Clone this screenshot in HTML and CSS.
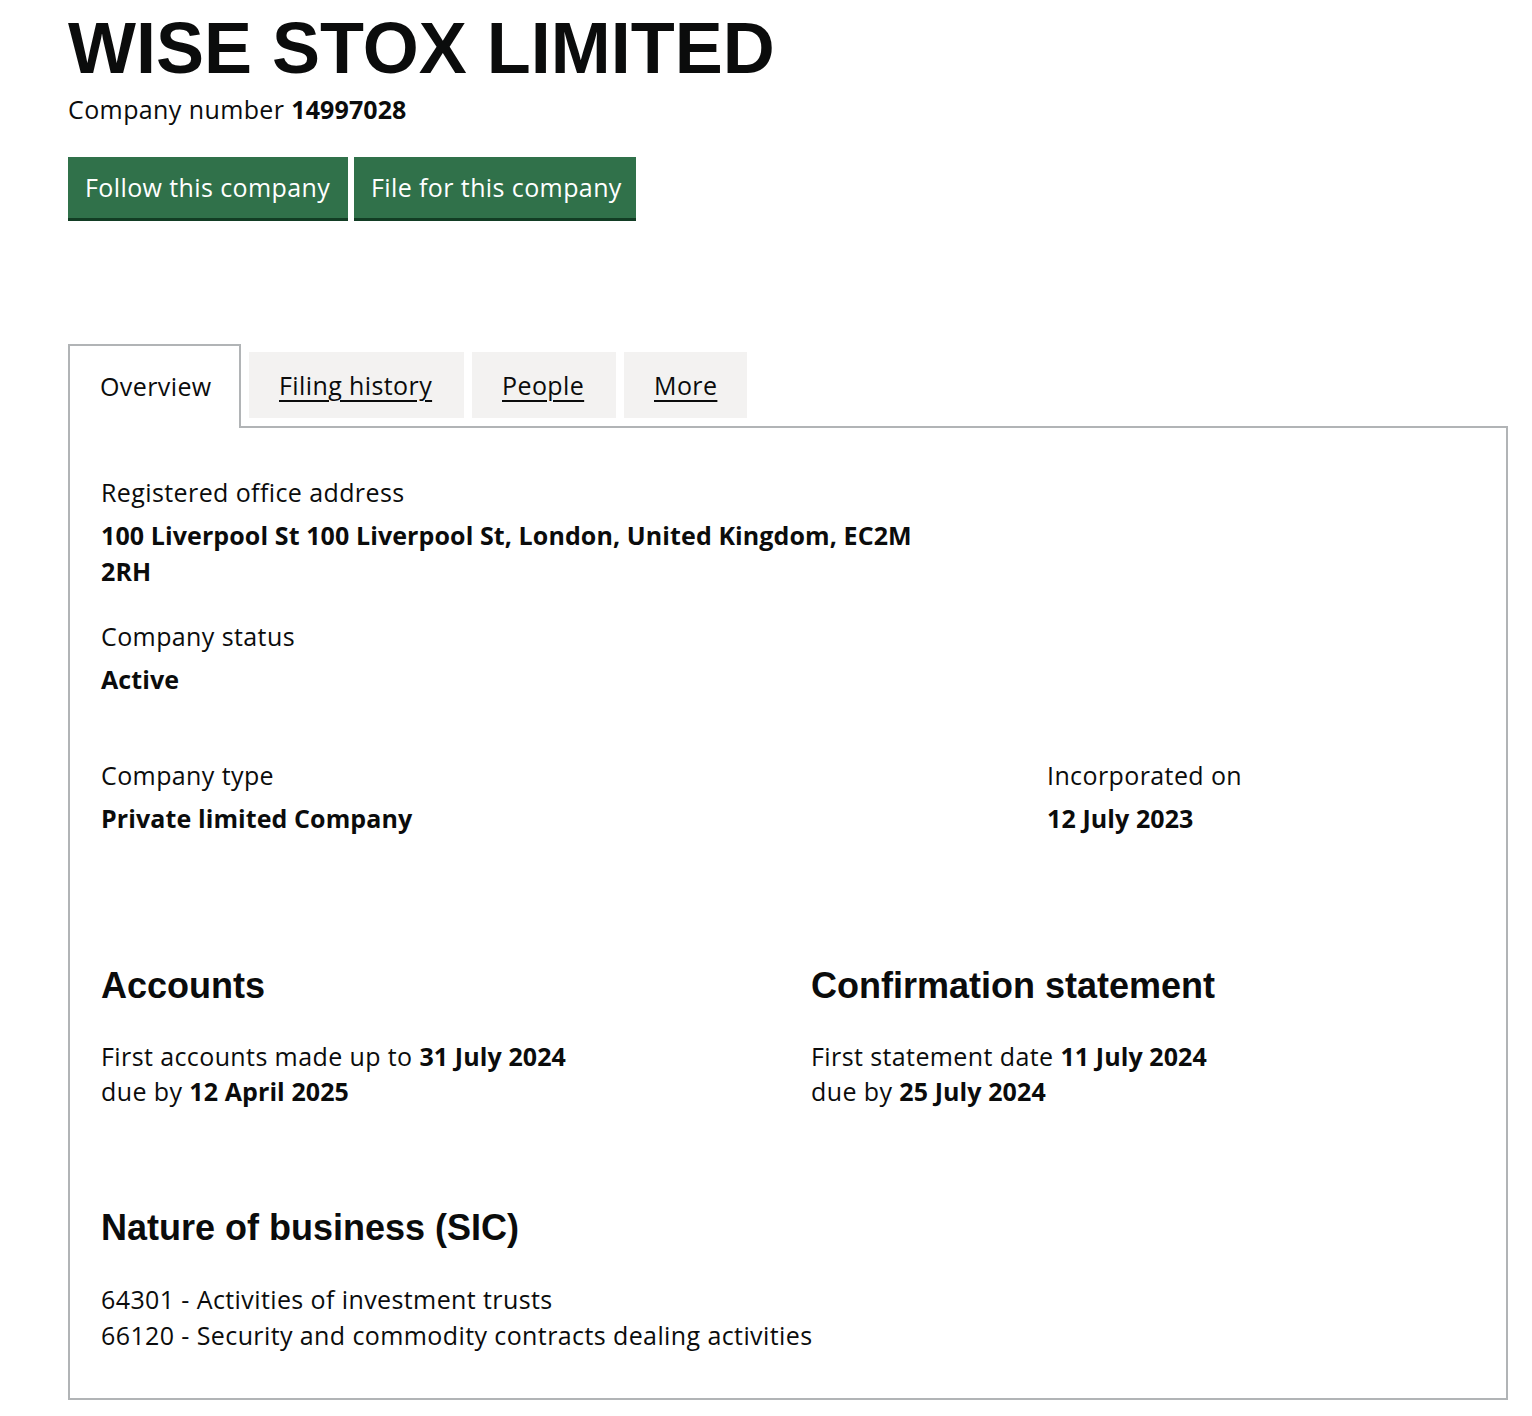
FILE: index.html
```html
<!DOCTYPE html>
<html lang="en">
<head>
<meta charset="utf-8">
<title>WISE STOX LIMITED</title>
<link rel="stylesheet" href="styles.css">
</head>
<body>
<main class="page">
  <h1 class="title">WISE STOX LIMITED</h1>
  <p class="company-number">Company number <strong>14997028</strong></p>
  <div class="actions">
    <a class="button" href="#">Follow this company</a>
    <a class="button" href="#">File for this company</a>
  </div>

  <div class="tabs">
    <ul class="tab-list">
      <li class="tab tab-selected"><span>Overview</span></li>
      <li class="tab"><a href="#">Filing history</a></li>
      <li class="tab"><a href="#">People</a></li>
      <li class="tab"><a href="#">More</a></li>
    </ul>
    <section class="panel">
      <div class="field">
        <p class="label">Registered office address</p>
        <p class="value">100 Liverpool St 100 Liverpool St, London, United Kingdom, EC2M 2RH</p>
      </div>
      <div class="field field-status">
        <p class="label">Company status</p>
        <p class="value">Active</p>
      </div>
      <div class="row row-type">
        <div class="field">
          <p class="label">Company type</p>
          <p class="value">Private limited Company</p>
        </div>
        <div class="field">
          <p class="label">Incorporated on</p>
          <p class="value">12 July 2023</p>
        </div>
      </div>
      <div class="row row-dates">
        <div class="block">
          <h2 class="heading">Accounts</h2>
          <p class="text">First accounts made up to <strong>31 July 2024</strong><br>due by <strong>12 April 2025</strong></p>
        </div>
        <div class="block">
          <h2 class="heading">Confirmation statement</h2>
          <p class="text">First statement date <strong>11 July 2024</strong><br>due by <strong>25 July 2024</strong></p>
        </div>
      </div>
      <div class="block block-sic">
        <h2 class="heading">Nature of business (SIC)</h2>
        <ul class="sic-list">
          <li>64301 - Activities of investment trusts</li>
          <li>66120 - Security and commodity contracts dealing activities</li>
        </ul>
      </div>
    </section>
  </div>
</main>
</body>
</html>
```

FILE: styles.css
```css
* { box-sizing: border-box; }

body {
  margin: 0;
  background: #ffffff;
  color: #0b0c0c;
  font-family: "Open Sans", Roboto, "Liberation Sans", Arial, sans-serif;
  font-size: 25px;
  line-height: 36px;
  letter-spacing: 0.4px;
}

strong { font-weight: 700; letter-spacing: 0.1px; }

.page {
  width: 1440px;
  margin-left: 68px;
}

.title {
  margin: 0;
  padding-top: 12px;
  font-family: "Liberation Sans", Arial, sans-serif;
  font-weight: 700;
  font-size: 72px;
  line-height: 72px;
  letter-spacing: 0;
}

.company-number {
  margin: 7px 0 0;
  line-height: 36px;
}

.actions {
  display: flex;
  gap: 6px;
  margin-top: 30px;
}

.button {
  display: block;
  height: 61px;
  padding: 0 17px;
  background: #30714a;
  color: #ffffff;
  text-decoration: none;
  line-height: 61px;
  white-space: nowrap;
  box-shadow: 0 3px 0 #123d24;
}

.button:first-child { width: 280px; }
.button:last-child { width: 282px; }

.tabs {
  margin-top: 126px;
}

.tab-list {
  display: flex;
  align-items: flex-start;
  gap: 8px;
  margin: 0;
  padding: 0;
  list-style: none;
  position: relative;
  z-index: 1;
}

.tab {
  margin-top: 8px;
  height: 66px;
  padding: 0 30px;
  background: #f3f2f1;
  line-height: 66px;
  white-space: nowrap;
}

.tab a {
  color: #0b0c0c;
  text-decoration: underline;
  text-decoration-thickness: 2px;
  text-underline-offset: 5px;
}

.tab-selected {
  margin-top: 0;
  height: 84px;
  padding: 0 30px;
  background: #ffffff;
  border: 2px solid #b1b4b6;
  border-bottom: 0;
  line-height: 80px;
  width: 173px;
}

.tab:nth-child(2) { width: 215px; }
.tab:nth-child(3) { width: 144px; }
.tab:nth-child(4) { width: 123px; }

.panel {
  margin-top: -2px;
  border: 2px solid #b1b4b6;
  padding: 46px 31px 45px 31px;
}

.field p { margin: 0; }

.label { line-height: 36px; }

.value {
  margin-top: 7px !important;
  font-weight: 700;
  line-height: 36px;
  letter-spacing: 0.1px;
  max-width: 840px;
}

.field-status { margin-top: 29px; }

.row {
  display: grid;
  grid-template-columns: 946px 1fr;
}

.row-type { margin-top: 60px; }

.row-dates {
  grid-template-columns: 710px 1fr;
  margin-top: 130px;
}

.heading {
  margin: 0;
  font-family: "Liberation Sans", Arial, sans-serif;
  font-weight: 700;
  font-size: 36px;
  line-height: 40px;
  letter-spacing: 0;
}

.text {
  margin: 33px 0 0;
  line-height: 35px;
}

.block-sic { margin-top: 99px; }

.sic-list {
  margin: 33px 0 0;
  padding: 0;
  list-style: none;
}

.sic-list li { line-height: 36px; }
```
